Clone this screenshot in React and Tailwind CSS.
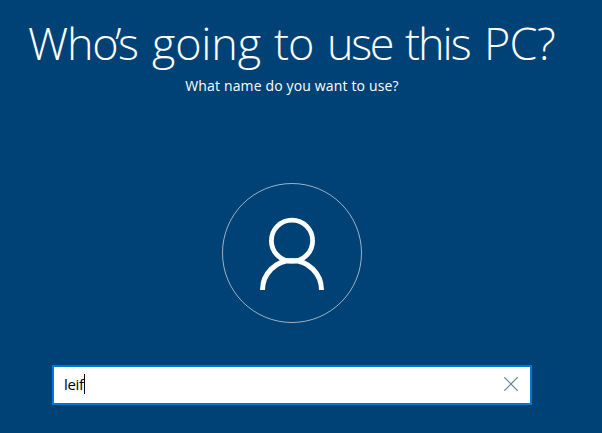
function Avatar() {
  return (
    <div className="mt-[85px] size-[140px] shrink-0">
      <svg viewBox="0 0 140 140" className="size-full" fill="none" stroke="white">
        <circle cx="70" cy="70" r="69.5" strokeOpacity="0.6" />
        <circle cx="70" cy="57.7" r="20.6" strokeWidth="4.8" />
        <path d="M40.5 107a29.5 29.5 0 0 1 59 0" strokeWidth="5" />
      </svg>
    </div>
  );
}

function NameField() {
  return (
    <div className="mt-[42px] flex h-10 w-[480px] shrink-0 items-center justify-between border-2 border-[#0078d7] bg-white pr-3 pl-2.5">
      <div className="flex items-center">
        <span className="-mt-0.5 text-[15px] leading-5 tracking-[-0.3px] text-black">leif</span>
        <span className="-mt-0.5 h-5 w-px bg-black" />
      </div>
      <svg viewBox="0 0 14 14" className="-mt-[3px] size-3.5" fill="none" stroke="#5b7f92" strokeWidth="1.2">
        <path d="M0.3 0.3 13.7 13.7M13.7 0.3 0.3 13.7" />
      </svg>
    </div>
  );
}

export default function App() {
  return (
    <main className="flex h-[433px] w-[602px] flex-col items-center overflow-hidden bg-[#004275] pr-[18px] font-['Open_Sans',sans-serif] text-white">
      <h1 className="mt-[13px] flex h-[60px] w-[528px] text-[45px] leading-[60px] font-light whitespace-pre">
        <span className="w-[124px] shrink-0 tracking-[-1.2px]">
          Wh<span className="tracking-[-3.6px]">o’</span>s{' '}
        </span>
        <span className="w-[122px] shrink-0 tracking-[-0.2px]">going </span>
        <span className="w-[53px] shrink-0 tracking-[-1px]">to </span>
        <span className="w-[78px] shrink-0 tracking-[-2.4px]">use </span>
        <span className="w-[79px] shrink-0 tracking-[-2px]">this </span>
        <span className="shrink-0 tracking-[-0.8px]">PC?</span>
      </h1>
      <p className="mt-[3px] h-[22px] text-[14px] leading-5 tracking-[0.15px] whitespace-nowrap">What name do you want to use?</p>
      <Avatar />
      <NameField />
    </main>
  );
}
